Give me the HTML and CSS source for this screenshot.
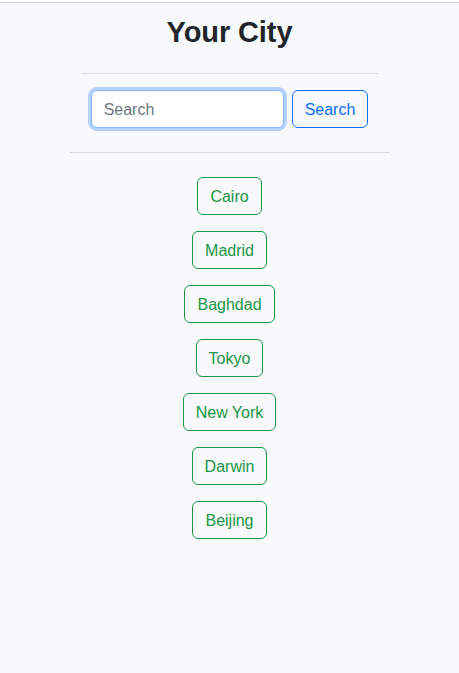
FILE: index.html
```html
<!DOCTYPE html>
<html lang="en">
<head>
<meta charset="utf-8">
<title>Your City</title>
<link rel="stylesheet" href="styles.css">
</head>
<body>
<div class="page">
  <h1 class="title">Your City</h1>
  <hr class="rule rule-top">
  <form class="search">
    <input class="search-input" type="text" placeholder="Search">
    <button class="btn btn-primary-outline" type="button">Search</button>
  </form>
  <hr class="rule rule-bottom">
  <ul class="cities">
    <li><button class="btn btn-success-outline" type="button">Cairo</button></li>
    <li><button class="btn btn-success-outline" type="button">Madrid</button></li>
    <li><button class="btn btn-success-outline" type="button">Baghdad</button></li>
    <li><button class="btn btn-success-outline" type="button">Tokyo</button></li>
    <li><button class="btn btn-success-outline" type="button">New York</button></li>
    <li><button class="btn btn-success-outline" type="button">Darwin</button></li>
    <li><button class="btn btn-success-outline" type="button">Beijing</button></li>
  </ul>
</div>
</body>
</html>
```
FILE: styles.css
```css
* { box-sizing: border-box; }
html { background: #ffffff; }
body {
  margin: 2px 0 0;
  border-top: 1px solid #d4d5d7;
  background: #f8f9fa;
  min-height: 671px;
  font-family: "Liberation Sans", Arial, sans-serif;
  color: #212529;
}
.page {
  display: flex;
  flex-direction: column;
  align-items: center;
  padding-top: 11px;
}
.title {
  margin: 0 0 8px;
  padding-top: 1px;
  height: 34.8px;
  font-size: 29px;
  line-height: 1.2;
  font-weight: 700;
  color: #212529;
  letter-spacing: -0.1px;
}
.rule {
  border: 0;
  border-top: 1px solid #dcdddf;
  margin: 16px 0;
  height: 0;
}
.rule-top { width: 298px; }
.rule-bottom { width: 320px; margin-top: 24px; margin-bottom: 24px; }
.search {
  display: flex;
  gap: 8px;
  margin: 0;
}
.search-input {
  width: 193px;
  height: 38px;
  padding: 7px 12px 5px;
  font-family: inherit;
  font-size: 16px;
  color: #212529;
  background: #ffffff;
  border: 1px solid #86b7fe;
  border-radius: 6px;
  box-shadow: 0 0 0 3px rgba(13, 110, 253, 0.28);
  outline: none;
}
.search-input::placeholder { color: #6c757d; }
.btn {
  height: 38px;
  padding: 7px 12px 5px;
  font-family: inherit;
  font-size: 16px;
  line-height: 24px;
  background: transparent;
  border: 1px solid;
  border-radius: 6px;
  cursor: pointer;
}
.btn-primary-outline {
  color: #0d6efd;
  border-color: #0d6efd;
}
.btn-success-outline {
  color: #1b9646;
  border-color: #1b9646;
}
.cities {
  list-style: none;
  margin: 0;
  padding: 0;
  display: flex;
  flex-direction: column;
  align-items: center;
  gap: 16px;
}
```
